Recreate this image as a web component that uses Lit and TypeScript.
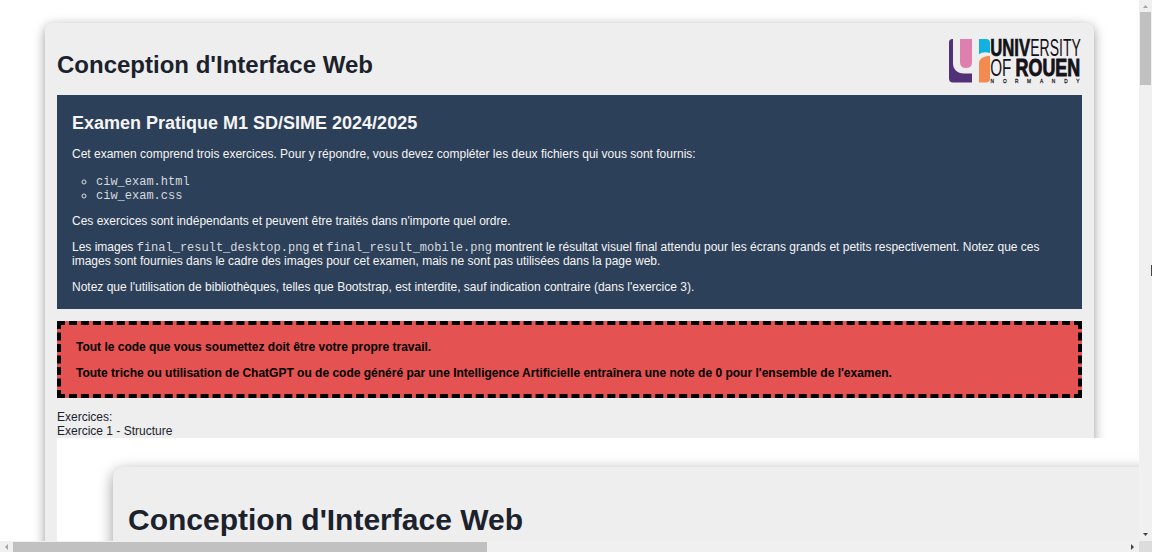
import { LitElement, html, css, svg } from "lit";
import { customElement } from "lit/decorators.js";

@customElement("univ-logo")
class UnivLogo extends LitElement {
  static styles = css`
    :host { display: block; width: 134px; height: 46px; }
    svg { display: block; overflow: visible; font-family: "Liberation Sans", Arial, sans-serif; fill: #141216; }
    .bold { font-weight: 700; }
    .small { font-size: 6px; }
  `;
  render() {
    const letters: [string, number][] = [
      ["N", 44.3], ["O", 56.8], ["R", 68.8], ["M", 81], ["A", 93.7], ["N", 105.5], ["D", 118], ["Y", 129.8],
    ];
    return html`<svg width="134" height="46" viewBox="0 0 134 46">
      <path fill="#523178" d="M4.5 1H5V25C5 31 9 35.5 16 35.5H24V44.5H5Q1 44.5 1 40.5V4.5Q1 1 4.5 1Z" />
      <path fill="#df7fad" d="M12 1H24V24Q24 30 18 30Q12 30 12 24Z" />
      <path fill="#13b1e2" d="M31 1H38Q42 1 42 5V15Q35 13 31 16.3Z" />
      <path fill="#f38a50" d="M31 44.5V26Q31 18 42 17.7V40.5Q42 44.5 38 44.5Z" />
      <text class="bold" transform="translate(42.2 17.6) scale(.7 1)" font-size="23" textLength="57" lengthAdjust="spacingAndGlyphs" stroke="#141216" stroke-width=".7">UNIV</text>
      <text transform="translate(82.3 17.6) scale(.66 1)" font-size="23" textLength="76.5" lengthAdjust="spacingAndGlyphs">ERSITY</text>
      <text transform="translate(42.2 38.4) scale(.66 1)" font-size="23" textLength="32" lengthAdjust="spacingAndGlyphs">OF</text>
      <text class="bold" transform="translate(67.6 38.4) scale(.75 1)" font-size="23" textLength="86" lengthAdjust="spacingAndGlyphs" stroke="#141216" stroke-width=".9">ROUEN</text>
      ${letters.map(([c, x]) => svg`<text class="small" text-anchor="middle" transform="translate(${x} 44.7) scale(.8 1)" stroke="#141216" stroke-width=".25">${c}</text>`)}
    </svg>`;
  }
}

@customElement("app-root")
class AppRoot extends LitElement {
  static styles = css`
    :host {
      display: grid;
      grid-template-columns: minmax(0, 1fr) 13px;
      grid-template-rows: minmax(0, 1fr) 11px;
      width: 1152px;
      height: 552px;
      overflow: hidden;
      position: relative;
      background: #fff;
      color: #1b222c;
      font: 12px/14px "Liberation Sans", Arial, sans-serif;
    }
    * { box-sizing: border-box; }
    .view { overflow: hidden; padding: 23px 45px 0 45px; }
    .card {
      height: 700px;
      padding: 12px;
      border-radius: 8px 8px 0 0;
      background: #eee;
      box-shadow: 0 3px 12px rgba(0, 0, 0, .4);
    }
    .head { display: flex; justify-content: space-between; height: 60px; }
    h1, h2, p, ul { margin: 0; }
    h1 { font-size: 24px; line-height: 28px; padding-top: 16px; }
    .logo { margin: 3px 0 0 0; }
    .intro { height: 214px; padding: 16px 15px 0; background: #2d4059; color: #f5f5f5; }
    h2 { font-size: 18px; line-height: 24px; margin-bottom: 12px; }
    .intro p { margin-bottom: 12px; }
    ul { padding: 1px 0 0 24px; margin-bottom: 12px; list-style: circle; color: #ddd; }
    code { font: 12px/14px "Liberation Mono", "Courier New", monospace; color: #d5d9de; }
    p code { line-height: 10px; }
    li { height: 14px; }
    .warn {
      height: 77px;
      margin: 12px 0 12px;
      padding: 15px 15px 0;
      border: 4px dashed #000;
      background: #e45252;
      color: #000;
      font-weight: 700;
    }
    .warn p { margin-bottom: 12px; }
    .frame { width: 1125px; height: 240px; overflow: hidden; background: #fff; padding: 29px 0 0 56px; }
    .inner {
      width: 1200px;
      height: 300px;
      padding: 36px 15px;
      border-radius: 10px;
      background: #eee;
      box-shadow: 0 4px 15px rgba(0, 0, 0, .4);
    }
    .inner h1 { font-size: 30px; line-height: 34px; padding: 0; }
    .vbar, .hbar { display: flex; background: #f0f0f0; justify-content: space-between; align-items: center; }
    .vbar { flex-direction: column; }
    .vthumb { width: 11px; height: 73px; margin-bottom: auto; background: #c1c1c1; }
    .hthumb { width: 474px; height: 10px; margin-right: auto; background: #c1c1c1; }
    .vbar svg, .hbar svg { display: block; flex: none; }
    .corner { background: #dcdcdc; }
    .caret { position: absolute; right: 0; top: 265px; width: 1px; height: 11px; background: #444; }
  `;
  render() {
    return html`
      <main class="view">
        <section class="card">
          <header class="head">
            <h1>Conception d'Interface Web</h1>
            <univ-logo class="logo"></univ-logo>
          </header>
          <div class="intro">
            <h2>Examen Pratique M1 SD/SIME 2024/2025</h2>
            <p>Cet examen comprend trois exercices. Pour y répondre, vous devez compléter les deux fichiers qui vous sont fournis:</p>
            <ul>
              <li><code>ciw_exam.html</code></li>
              <li><code>ciw_exam.css</code></li>
            </ul>
            <p>Ces exercices sont indépendants et peuvent être traités dans n'importe quel ordre.</p>
            <p>Les images <code>final_result_desktop.png</code> et <code>final_result_mobile.png</code> montrent le résultat visuel final attendu pour les écrans grands et petits respectivement. Notez que ces images sont fournies dans le cadre des images pour cet examen, mais ne sont pas utilisées dans la page web.</p>
            <p>Notez que l'utilisation de bibliothèques, telles que Bootstrap, est interdite, sauf indication contraire (dans l'exercice 3).</p>
          </div>
          <div class="warn">
            <p>Tout le code que vous soumettez doit être votre propre travail.</p>
            <p>Toute triche ou utilisation de ChatGPT ou de code généré par une Intelligence Artificielle entraînera une note de 0 pour l'ensemble de l'examen.</p>
          </div>
          <div>Exercices:</div>
          <div>Exercice 1 - Structure</div>
          <div class="frame"><div class="inner"><h1>Conception d'Interface Web</h1></div></div>
        </section>
      </main>
      <div class="vbar">
        <svg width="13" height="12"><path fill="#a3a3a3" d="M4 8L6.5 5L9 8Z" /></svg>
        <div class="vthumb"></div>
        <svg width="13" height="13"><path fill="#444" d="M4 5H9L6.5 8Z" /></svg>
      </div>
      <div class="hbar">
        <svg width="13" height="11"><path fill="#a3a3a3" d="M8 3V9L5 6Z" /></svg>
        <div class="hthumb"></div>
        <svg width="11" height="11"><path fill="#444" d="M3 3V9L6 6Z" /></svg>
      </div>
      <div class="corner"></div>
      <div class="caret"></div>
    `;
  }
}
